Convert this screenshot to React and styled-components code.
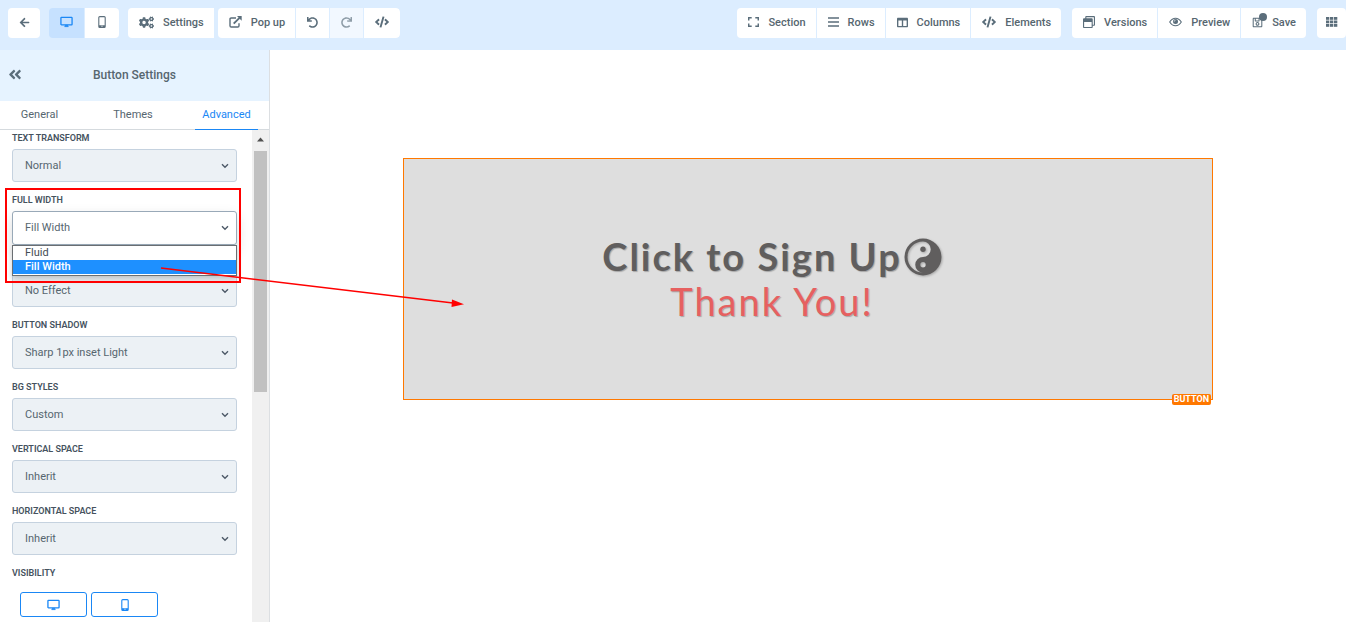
import React from 'react';
import styled, { createGlobalStyle, css } from 'styled-components';
import {
    FaAngleDoubleLeft,
    FaArrowLeft,
    FaCode,
    FaCogs,
    FaColumns,
    FaRegSave,
    FaRegWindowRestore,
    FaUndo,
    FaRedo
} from 'react-icons/fa';

const colors = {
    bar: '#dcedff',
    head: '#e6f3ff',
    text: '#56666f',
    icon: '#5b6e7b',
    label: '#45525e',
    primary: '#1a87f5',
    line: '#d5dade',
    field: '#ecf1f5',
    fieldLine: '#c5d2df',
    orange: '#ff7800',
    red: '#ff0000'
};

const GlobalStyle = createGlobalStyle`
    *, *::before, *::after {
        box-sizing: border-box;
    }

    body {
        margin: 0;
        background: #fff;
        color: ${colors.text};
        font-family: Roboto, "Liberation Sans", sans-serif;
        font-size: 11px;
        overflow: hidden;
    }

    button, select {
        font: inherit;
        color: inherit;
    }
`;

const Page = styled.div`
    position: relative;
    display: flex;
    flex-direction: column;
    height: 100vh;
    overflow: hidden;
`;

const Toolbar = styled.header`
    display: flex;
    flex: none;
    justify-content: space-between;
    padding: 8px 0 12px 8px;
    background: ${colors.bar};
`;

const ToolbarSide = styled.div`
    display: flex;
    gap: ${props => props.$gap}px;
`;

const ButtonGroup = styled.div`
    display: flex;
    gap: ${props => props.$gap || 1}px;
    border-radius: 4px;
    overflow: hidden;
`;

const ToolButton = styled.button`
    display: flex;
    align-items: center;
    justify-content: ${props => (props.$label ? 'flex-start' : 'center')};
    gap: 9px;
    height: 30px;
    min-width: ${props => props.$width || 34}px;
    padding: ${props => (props.$label ? '0 10px 2px 11px' : '0 0 2px')};
    border: 0;
    background: ${props => (props.$active ? '#c6e1ff' : '#fff')};
    color: ${props => (props.$active ? colors.primary : colors.text)};
    font-weight: 500;
    white-space: nowrap;

    svg {
        flex: none;
        color: ${props => (props.$active ? colors.primary : colors.icon)};
    }

    &:disabled {
        background: #f2f8ff;

        svg {
            opacity: 0.65;
        }
    }
`;

const IconSlot = styled.span`
    position: relative;
    display: flex;
`;

const Dot = styled.span`
    position: absolute;
    top: -4px;
    right: -4px;
    width: 8px;
    height: 8px;
    border-radius: 50%;
    background: ${colors.icon};
`;

const Workspace = styled.div`
    display: flex;
    flex: 1;
    min-height: 0;
`;

const Sidebar = styled.aside`
    display: flex;
    flex: none;
    flex-direction: column;
    width: 270px;
    border-right: 1px solid #dcdfe2;
`;

const SidebarHead = styled.div`
    display: flex;
    flex: none;
    align-items: center;
    height: 51px;
    padding: 0 8px 2px;
    background: ${colors.head};
`;

const CollapseButton = styled.button`
    display: flex;
    width: 14px;
    padding: 0;
    border: 0;
    background: none;
    color: ${colors.icon};
`;

const SidebarTitle = styled.h1`
    flex: 1;
    margin: 0 14px 0 0;
    font-size: 12px;
    font-weight: 500;
    text-align: center;
`;

const Tabs = styled.nav`
    display: flex;
    flex: none;
    justify-content: space-between;
    height: 29px;
    padding: 0 11px 0 8px;
    border-bottom: 1px solid ${colors.line};
`;

const Tab = styled.button`
    width: 63px;
    height: 29px;
    padding: 0 0 2px;
    border: 0;
    border-bottom: 1px solid ${props => (props.$active ? colors.primary : 'transparent')};
    background: none;
    color: ${props => (props.$active ? colors.primary : colors.text)};
`;

const Panel = styled.div`
    display: flex;
    flex: 1;
    min-height: 0;
`;

const Fields = styled.div`
    flex: 1;
    padding: 0 15px 0 12px;
    overflow: hidden;
`;

const Scrollbar = styled.div`
    display: flex;
    flex-direction: column;
    align-items: center;
    width: 17px;
    background: #f0f0f0;
`;

const ScrollArrow = styled.svg`
    flex: none;
    width: 17px;
    height: 21px;
`;

const ScrollThumb = styled.div`
    width: 13px;
    height: 49%;
    background: #c1c1c1;
`;

const Field = styled.div`
    position: relative;
    margin-bottom: 10px;
`;

const labelStyle = css`
    display: block;
    margin-bottom: 3px;
    color: ${colors.label};
    font-size: 9px;
    font-weight: 600;
    line-height: 16px;
    text-transform: uppercase;
`;

const FieldLabel = styled.label`
    ${labelStyle}
`;

const GroupLabel = styled.div`
    ${labelStyle}
`;

// keeps the height of a label that lies under the open menu
const CoveredLabel = styled.div`
    height: 16px;
    margin-bottom: 3px;
`;

const SelectBox = styled.div`
    position: relative;
    display: flex;
`;

const Select = styled.select`
    width: 100%;
    height: ${props => (props.$open ? 34 : 33)}px;
    padding: 0 12px ${props => (props.$open ? 2 : 0)}px;
    appearance: none;
    border: 1px solid ${props => (props.$open ? '#99a9b8' : colors.fieldLine)};
    border-radius: 3px;
    background: ${props => (props.$open ? '#fff' : colors.field)};
    color: ${colors.text};
    box-shadow: ${props => (props.$open ? '0 6px 14px rgba(0, 0, 0, 0.15)' : 'none')};
`;

const Chevron = styled.svg`
    position: absolute;
    top: 14px;
    right: 8px;
    width: 8px;
    height: 6px;
    pointer-events: none;
`;

const Menu = styled.ul`
    position: absolute;
    z-index: 2;
    top: 100%;
    left: 0;
    right: 0;
    margin: 0;
    padding: 0 0 1px;
    border: 1px solid #6a6e72;
    background: #fff;
    box-shadow: 0 3px 6px rgba(0, 0, 0, 0.2);
    list-style: none;
`;

const MenuItem = styled.li`
    padding: 0 12px;
    background: ${props => (props.$selected ? '#1e90ff' : '#fff')};
    color: ${props => (props.$selected ? '#fff' : '#444c55')};
    font-weight: ${props => (props.$selected ? 500 : 400)};
    line-height: 14px;
`;

const Highlight = styled.div`
    position: absolute;
    z-index: 3;
    top: -4px;
    right: -4px;
    bottom: -38px;
    left: -7px;
    border: 2px solid ${colors.red};
    pointer-events: none;
`;

const Pointer = styled.svg`
    position: absolute;
    z-index: 4;
    top: 260px;
    left: 160px;
    width: 305px;
    height: 50px;
    pointer-events: none;
`;

const VisibilityRow = styled.div`
    display: flex;
    gap: 4px;
    padding: 8px;
`;

const VisibilityButton = styled.button`
    display: flex;
    align-items: center;
    justify-content: center;
    width: 67px;
    height: 25px;
    border: 1px solid ${colors.primary};
    border-radius: 3px;
    background: #fff;
    color: ${colors.primary};
`;

const Canvas = styled.main`
    flex: 1;
    padding: 108px 24px 0;
`;

const Block = styled.section`
    position: relative;
    width: 100%;
    max-width: 810px;
    margin: 0 auto;
    border: 1px solid ${colors.orange};
`;

const SignUpButton = styled.button`
    display: block;
    width: 100%;
    padding: 75px 72px 75px 0;
    border: 0;
    background: #dedede;
    color: #605e5e;
    font-family: Lato, sans-serif;
    font-size: 38px;
    letter-spacing: 2px;
    line-height: 45px;
    text-shadow: 1px 1px 1px rgba(0, 0, 0, 0.25);
`;

const MainLine = styled.span`
    display: flex;
    align-items: center;
    justify-content: center;
    gap: 2px;
    font-weight: 700;

    svg {
        filter: drop-shadow(1px 1px 1px rgba(0, 0, 0, 0.25));
    }
`;

const SubLine = styled.span`
    display: block;
    color: #e66060;
`;

const BlockTag = styled.span`
    position: absolute;
    right: 1px;
    bottom: -6px;
    padding: 0 2px;
    border-radius: 2px;
    background: ${colors.orange};
    color: #fff;
    font-size: 9px;
    font-weight: 700;
    line-height: 11px;
`;

const DesktopIcon = () => (
    <svg width="13" height="12" viewBox="0 0 14 12" fill="none" stroke="currentColor">
        <rect x="1" y="1" width="12" height="8" rx="0.6" strokeWidth="1.4" />
        <path d="M5.6 9.5h2.8l.6 1.5H5z" fill="currentColor" strokeWidth="0.6" />
    </svg>
);

const MobileIcon = () => (
    <svg width="8" height="12" viewBox="0 0 8 12" fill="none" stroke="currentColor">
        <rect x="0.8" y="0.6" width="6.4" height="10.8" rx="1" strokeWidth="1.1" />
        <path d="M1 9.2h6v2H1z" fill="currentColor" stroke="none" />
        <path d="M3.4 10.2h1.2" stroke="#fff" strokeWidth="0.9" />
    </svg>
);

const PopupIcon = () => (
    <svg width="13" height="12" viewBox="0 0 13 12" fill="none" stroke="currentColor" strokeWidth="1.4">
        <path d="M7 2H2.2Q1 2 1 3.2v6.6Q1 11 2.2 11h6.6Q10 11 10 9.8V7.3" />
        <path d="M4.7 7.6L10.5 1.9" strokeWidth="1.9" />
        <path d="M8 0h4.7v4.7z" fill="currentColor" stroke="none" />
    </svg>
);

const SectionIcon = () => (
    <svg width="11" height="10" viewBox="0 0 11 10" fill="none" stroke="currentColor" strokeWidth="1.5">
        <path d="M.7 3.4V.7h3M7.3.7h3v2.7M.7 6.6v2.7h3M7.3 9.3h3V6.6" />
    </svg>
);

const RowsIcon = () => (
    <svg width="11" height="10" viewBox="0 0 11 10" stroke="currentColor" strokeWidth="1.4">
        <path d="M0 1h11M0 5h11M0 9h11" />
    </svg>
);

const EyeIcon = () => (
    <svg width="13" height="10" viewBox="0 0 13 10" fill="none" stroke="currentColor">
        <path d="M.7 5Q3 1.2 6.5 1.2T12.3 5Q10 8.8 6.5 8.8T.7 5z" strokeWidth="1.1" />
        <circle cx="6.5" cy="4.6" r="2.5" fill="currentColor" stroke="none" />
        <path d="M5.2 4.6q0-1.3 1.3-1.3" stroke="#fff" strokeWidth="0.7" />
    </svg>
);

const GridIcon = () => (
    <svg width="12" height="10" viewBox="0 0 12 10" fill="currentColor">
        {[0, 4, 8].map(x => [0, 3.5, 7].map(y => (
            <rect key={`${x}-${y}`} x={x} y={y} width="3.3" height="2.8" />
        )))}
    </svg>
);

const YinYangIcon = () => (
    <svg width="38" height="38" viewBox="0 0 38 38" fill="currentColor">
        <path
            fillRule="evenodd"
            d="M19 .5a18.5 18.5 0 1 1 0 37 18.5 18.5 0 1 1 0-37z
                M19 3.5a15.5 15.5 0 0 0 0 31a7.75 7.75 0 0 1 0-15.5a7.75 7.75 0 0 0 0-15.5z
                M19 24a2.7 2.7 0 1 0 0 5.4 2.7 2.7 0 1 0 0-5.4z"
        />
        <circle cx="19" cy="11.3" r="2.7" />
    </svg>
);

const Tool = props => {
    const { icon, label, name, active, disabled, width, dot } = props;

    return (
        <ToolButton
            type="button"
            aria-label={label ? undefined : name}
            $label={label}
            $active={active}
            $width={width}
            disabled={disabled}
        >
            <IconSlot>
                {icon}
                {dot && <Dot />}
            </IconSlot>
            {label}
        </ToolButton>
    );
};

const SelectField = props => {
    const { id, label, value, options, open, covered } = props;

    return (
        <Field>
            {covered
                ? <CoveredLabel />
                : <FieldLabel htmlFor={id}>{label}</FieldLabel>
            }
            <SelectBox>
                <Select id={id} defaultValue={value} $open={open} aria-label={covered ? label : undefined}>
                    {(options || [value]).map(option => <option key={option}>{option}</option>)}
                </Select>
                <Chevron viewBox="0 0 8 6" fill="none" stroke="#4d5a68" strokeWidth="1.4">
                    <path d="M1 1.2l3 3 3-3" />
                </Chevron>
                {open && (
                    <Menu role="listbox" aria-label={label}>
                        {options.map(option => (
                            <MenuItem
                                key={option}
                                role="option"
                                aria-selected={option === value}
                                $selected={option === value}
                            >
                                {option}
                            </MenuItem>
                        ))}
                    </Menu>
                )}
            </SelectBox>
            {open && <Highlight />}
        </Field>
    );
};

const fields = [
    { id: 'text-transform', label: 'Text transform', value: 'Normal' },
    { id: 'full-width', label: 'Full width', value: 'Fill Width', options: ['Fluid', 'Fill Width'], open: true },
    { id: 'effect', label: 'Effect', value: 'No Effect', covered: true },
    { id: 'button-shadow', label: 'Button shadow', value: 'Sharp 1px inset Light' },
    { id: 'bg-styles', label: 'BG styles', value: 'Custom' },
    { id: 'vertical-space', label: 'Vertical space', value: 'Inherit' },
    { id: 'horizontal-space', label: 'Horizontal space', value: 'Inherit' }
];

const TopBar = () => (
    <Toolbar>
        <ToolbarSide $gap={9}>
            <ButtonGroup>
                <Tool name="Back" width={32} icon={<FaArrowLeft size={11} />} />
            </ButtonGroup>
            <ButtonGroup>
                <Tool name="Desktop" width={35} active icon={<DesktopIcon />} />
                <Tool name="Mobile" icon={<MobileIcon />} />
            </ButtonGroup>
            <ButtonGroup $gap={4}>
                <Tool label="Settings" icon={<FaCogs size={15} />} />
                <ButtonGroup>
                    <Tool label="Pop up" icon={<PopupIcon />} />
                    <Tool name="Undo" width={33} icon={<FaUndo size={11} />} />
                    <Tool name="Redo" width={33} disabled icon={<FaRedo size={11} />} />
                    <Tool name="Code" width={36} icon={<FaCode size={14} />} />
                </ButtonGroup>
            </ButtonGroup>
        </ToolbarSide>
        <ToolbarSide $gap={11}>
            <ButtonGroup>
                <Tool label="Section" icon={<SectionIcon />} />
                <Tool label="Rows" icon={<RowsIcon />} />
                <Tool label="Columns" icon={<FaColumns size={11} />} />
                <Tool label="Elements" icon={<FaCode size={14} />} />
            </ButtonGroup>
            <ButtonGroup>
                <Tool label="Versions" icon={<FaRegWindowRestore size={12} />} />
                <Tool label="Preview" icon={<EyeIcon />} />
                <Tool label="Save" dot icon={<FaRegSave size={11} />} />
            </ButtonGroup>
            <ButtonGroup>
                <Tool name="Apps" width={29} icon={<GridIcon />} />
            </ButtonGroup>
        </ToolbarSide>
    </Toolbar>
);

const SettingsPanel = () => (
    <Sidebar>
        <SidebarHead>
            <CollapseButton type="button" aria-label="Collapse">
                <FaAngleDoubleLeft size={15} />
            </CollapseButton>
            <SidebarTitle>Button Settings</SidebarTitle>
        </SidebarHead>
        <Tabs>
            <Tab type="button">General</Tab>
            <Tab type="button">Themes</Tab>
            <Tab type="button" $active>Advanced</Tab>
        </Tabs>
        <Panel>
            <Fields>
                {fields.map(field => <SelectField key={field.id} {...field} />)}
                <GroupLabel>Visibility</GroupLabel>
                <VisibilityRow>
                    <VisibilityButton type="button" aria-label="Show on desktop">
                        <DesktopIcon />
                    </VisibilityButton>
                    <VisibilityButton type="button" aria-label="Show on mobile">
                        <MobileIcon />
                    </VisibilityButton>
                </VisibilityRow>
            </Fields>
            <Scrollbar>
                <ScrollArrow viewBox="0 0 17 21">
                    <path d="M5 11.5L8.5 7.5l3.5 4z" fill="#505050" />
                </ScrollArrow>
                <ScrollThumb />
            </Scrollbar>
        </Panel>
    </Sidebar>
);

const App = () => (
    <Page>
        <GlobalStyle />
        <TopBar />
        <Workspace>
            <SettingsPanel />
            <Canvas>
                <Block>
                    <SignUpButton type="button">
                        <MainLine>
                            Click to Sign Up
                            <YinYangIcon />
                        </MainLine>
                        <SubLine>Thank You!</SubLine>
                    </SignUpButton>
                    <BlockTag>BUTTON</BlockTag>
                </Block>
            </Canvas>
        </Workspace>
        <Pointer viewBox="0 0 305 50" fill={colors.red}>
            <path d="M1 8l292 35" stroke={colors.red} strokeWidth="1.5" />
            <path d="M292 39.5l12 4.8-12.5 2.7z" />
        </Pointer>
    </Page>
);

export default App;
